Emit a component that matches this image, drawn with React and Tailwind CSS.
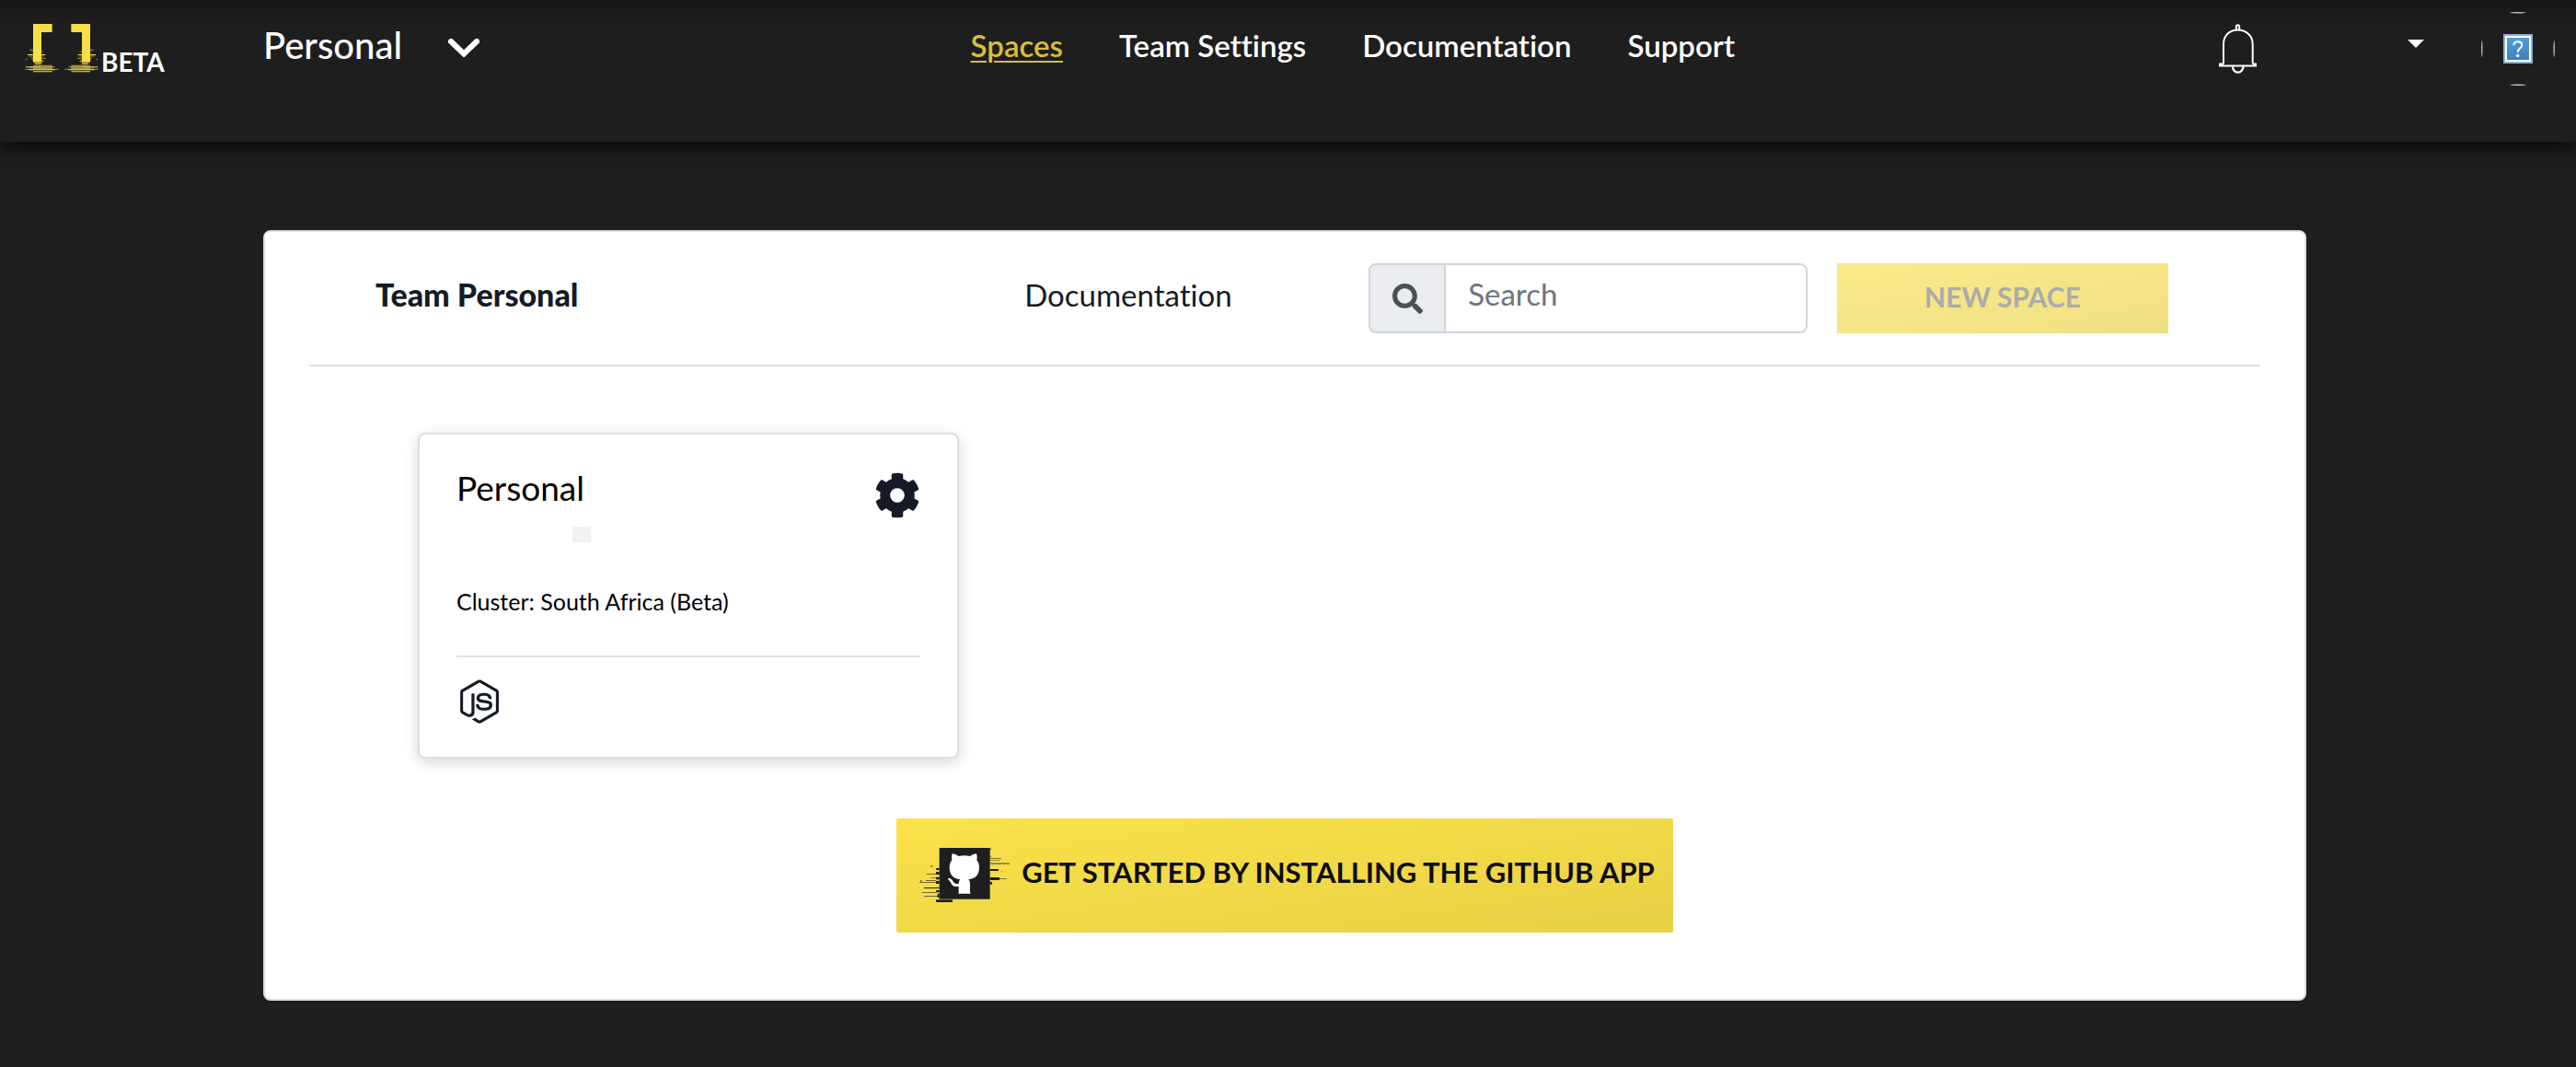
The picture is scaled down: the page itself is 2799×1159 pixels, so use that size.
import { FaCog, FaNodeJs, FaSearch } from 'react-icons/fa';

const NAV = [
  { label: 'Spaces', active: true },
  { label: 'Team Settings' },
  { label: 'Documentation' },
  { label: 'Support' },
];

function LogoHalf() {
  return (
    <g>
      <path d="M48 48H110V75H75V172H48Z" />
      <path d="M48 150H75V172H48Z" />
      <path opacity=".55" d="M36 131H48V134H36ZM42 137H82V139H42ZM75 134H80V136H75ZM42 158H90V162H42ZM45 165H80V168H45ZM48 168H84V170H48Z" />
      <path d="M30 147H88V150H30ZM34 152H82V154H34ZM25 162H28V165H25ZM50 170H80V172H50ZM53 175H76V178H53ZM56 179H74V181H56Z" />
      <path opacity=".6" d="M48 182H110V194H48ZM24 186H118V189H24ZM36 190H112V192H36ZM22 194H131V197H22Z" />
      <path d="M24 188H72V190H24ZM34 196H119V199H34ZM48 202H110V205H48Z" />
    </g>
  );
}

function Logo() {
  return (
    <svg viewBox="18 48 252 168" className="h-14 w-[84px] shrink-0" aria-hidden="true">
      <defs>
        <linearGradient id="logoGold" gradientUnits="userSpaceOnUse" x1="24" y1="0" x2="258" y2="0">
          <stop offset="0" stopColor="#fbe24a" />
          <stop offset="1" stopColor="#e8d045" />
        </linearGradient>
      </defs>
      <g fill="url(#logoGold)">
        <LogoHalf />
        <g transform="translate(282 0) scale(-1 1)">
          <LogoHalf />
        </g>
      </g>
    </svg>
  );
}

function BellIcon() {
  return (
    <svg viewBox="153 78 124 162" className="h-[54px] w-[41px]" fill="none" stroke="white" strokeWidth="6" aria-hidden="true">
      <path d="M210 98V86a5 5 0 0 1 10 0V98" />
      <path d="M168 208V144C168 116 188 97 215 97S264 116 264 144V208" />
      <path d="M168 209H156V215H274V209H264" />
      <path d="M198 217a17 19 0 0 0 35 0" strokeWidth="7" />
    </svg>
  );
}

function AvatarPlaceholder() {
  return (
    <svg viewBox="0 0 80 80" className="size-20" role="img" aria-label="Profile picture">
      <defs>
        <linearGradient id="avatarBlue" x1="0" y1="0" x2="0" y2="1">
          <stop offset="0" stopColor="#519fd3" />
          <stop offset="1" stopColor="#3f7fbb" />
        </linearGradient>
      </defs>
      <g fill="#c4c4c4">
        <ellipse cx="40" cy="0.8" rx="9" ry="0.7" />
        <ellipse cx="40" cy="79.2" rx="9" ry="0.7" />
        <ellipse cx="0.8" cy="40" rx="0.7" ry="9" />
        <ellipse cx="79.2" cy="40" rx="0.7" ry="9" />
      </g>
      <rect x="24" y="24" width="32" height="32" fill="#8fafd6" />
      <rect x="26" y="26" width="28" height="28" fill="white" />
      <rect x="28" y="28" width="24" height="24" fill="url(#avatarBlue)" />
      <path d="M35.3 36.2c.2-2.500 2-3.900 4.500-3.900 2.600 0 4.500 1.500 4.500 3.800 0 3.200-4.600 3.500-4.600 7.700" fill="none" stroke="white" strokeWidth="2" />
      <circle cx="39.600" cy="47.500" r="1.800" fill="white" />
    </svg>
  );
}

function GithubGlitch() {
  return (
    <svg viewBox="27 42 297 180" className="h-[60px] w-[99px] shrink-0" aria-hidden="true">
      <g fill="#1e1e1e">
        <rect x="92" y="42" width="165" height="167" />
        <path d="M81 108H92V114H81ZM81 120H92V129H81ZM81 137H92V145H81ZM81 150H92V159H81ZM81 180H92V187H81ZM86 191H92V204H86ZM42 171H92V174H42ZM81 211H135V219H81Z" />
        <path d="M257 111H285V117H257ZM257 138H288V147H257ZM257 153H264V161H257ZM257 44H261V48H257ZM257 68H260V72H257Z" />
        <path opacity=".6" d="M64 99H70V104H64ZM50 126H92V129H50ZM64 138H92V140H64ZM48 147H82V150H48ZM27 153H82V156H27ZM30 147H35V152H30ZM35 186H82V189H35ZM42 198H88V201H42Z" />
        <path opacity=".55" d="M257 75H294V78H257ZM257 82H290V84H257ZM257 91H321V95H257ZM288 141H311V144H288ZM294 117H297V119H294Z" />
      </g>
      <path fill="white" d="M134 61C141 61 150 66 155 69C167 66 180 66 192 69C197 66 206 61 213 61C216 69 215 77 214 82C219 88 222 96 222 105C222 131 209 142 187 145C191 149 192 153 192 158V187C192 189 193 190 194 191H154C155 190 155 189 155 187V168C138 170 133 164 130 157C127 150 123 147 120 144C119 141 122 140 126 141C132 143 135 149 139 154C143 160 149 160 155 158C155 153 157 149 160 145C138 142 125 131 125 105C125 96 128 88 133 82C132 77 131 69 134 61Z" />
    </svg>
  );
}

function Header() {
  return (
    <header className="relative z-10 h-[154px] bg-[#1e1e1e] bg-[linear-gradient(to_bottom,#161616,#1e1e1e_26px)] shadow-[0_4px_20px_rgba(0,0,0,0.9)]">
      <div className="grid h-[98px] grid-cols-[15fr_auto_13fr] items-center">
        <div className="flex items-center pl-[26px]">
          <a href="#home" className="mt-2.5 flex w-[260px] shrink-0 items-end text-[28px] leading-[30px] font-bold text-white">
            <Logo />
            BETA
          </a>
          <button type="button" className="flex items-center gap-[50px] text-[40px] leading-[48px] font-medium text-white">
            Personal
            <svg viewBox="0 0 34 20" className="mt-1.5 h-5 w-[34px]" fill="none" stroke="white" strokeWidth="6" strokeLinecap="round" aria-hidden="true">
              <path d="M3 3L17 16.500L31 3" />
            </svg>
          </button>
        </div>
        <nav className="flex items-center gap-[61px] text-[33px] leading-10 font-semibold text-white">
          {NAV.map(({ label, active }) => (
            <a
              key={label}
              href={'#' + label.toLowerCase().replace(' ', '-')}
              aria-current={active ? 'page' : undefined}
              className={active ? 'text-[#d9be3b] underline decoration-2 underline-offset-4' : ''}
            >
              {label}
            </a>
          ))}
        </nav>
        <div className="flex items-center justify-end pr-[23px]">
          <button type="button" aria-label="Notifications" className="mt-2 mr-[164px]">
            <BellIcon />
          </button>
          <button type="button" aria-label="Account menu" className="mr-[62px] -mt-1">
            <svg viewBox="0 0 18 9" className="h-[9px] w-[18px]" fill="white" aria-hidden="true">
              <path d="M0 0H18L9 9Z" />
            </svg>
          </button>
          <div className="mt-2">
            <AvatarPlaceholder />
          </div>
        </div>
      </div>
    </header>
  );
}

function Toolbar() {
  return (
    <div className="flex items-center border-b-2 border-[#dedede] py-[34px] pr-[100px] pl-[72px]">
      <h1 className="w-[36.2%] pb-2 text-[34px] leading-10 font-black text-[#151b26]">Team Personal</h1>
      <div className="w-[19.2%] pb-2 text-[33px] leading-10 text-[#151b26]">
        <a href="#docs">Documentation</a>
      </div>
      <div className="mr-8 flex h-[76px] min-w-0 flex-1 overflow-hidden rounded-lg border-2 border-[#ced4da] bg-white">
        <label htmlFor="search" aria-label="Search spaces" className="flex w-[82px] shrink-0 items-center justify-center border-r-2 border-[#ced4da] bg-[#ebecf0] text-[#495057]">
          <FaSearch className="size-[33px]" aria-hidden="true" />
        </label>
        <input
          id="search"
          type="search"
          aria-label="Search spaces"
          placeholder="Search"
          className="min-w-0 flex-1 px-6 pb-2 text-[33px] text-[#495057] outline-none placeholder:text-[#6c757d]"
        />
      </div>
      <button
        type="button"
        disabled
        className="h-[76px] w-[360px] shrink-0 bg-linear-to-br from-[#fcea8a] to-[#eee083] pb-1 text-[30px] leading-9 font-bold text-[#ababab]"
      >
        NEW SPACE
      </button>
    </div>
  );
}

function SpaceCard() {
  return (
    <article className="w-[588px] rounded-lg border-2 border-[#dedede] bg-white px-10 pt-[38px] pb-9 text-black shadow-[0_4px_16px_rgba(0,0,0,0.16)]">
      <div className="flex h-14 items-start justify-between">
        <h2 className="text-[37px] leading-10">Personal</h2>
        <button type="button" aria-label="Space settings" className="flex h-14 items-center text-[#151b26]">
          <FaCog className="size-[50px]" />
        </button>
      </div>
      <div className="mt-1.5 ml-[126px] h-[17px] w-5 bg-[#f1f1f1]" />
      <p className="mt-12 text-[25px] leading-8">Cluster: South Africa (Beta)</p>
      <hr className="mt-[43px] border-t-2 border-[#dee2e6]" />
      <FaNodeJs className="mt-6 ml-[3px] h-12 w-[44px] text-[#151b26]" role="img" aria-label="Node.js" />
    </article>
  );
}

export default function App() {
  return (
    <div className="min-h-screen bg-[#1e1e1e] pb-[71px] font-['Lato',sans-serif] [font-variant-ligatures:none]">
      <Header />
      <main className="mt-24 mr-[293px] ml-[286px] rounded-lg border-2 border-[#dedede] bg-white px-12 pb-[72px]">
        <Toolbar />
        <section className="mt-[72px] ml-[118px]">
          <SpaceCard />
        </section>
        <div className="mt-[65px] flex justify-center">
          <button
            type="button"
            className="flex h-[124px] items-center rounded-xs bg-linear-to-br from-[#fbe24a] to-[#e8d044] pr-5 pl-[25px] text-[31px] leading-10 font-bold text-[#0e0e0e]"
          >
            <GithubGlitch />
            <span className="ml-3 pb-2">GET STARTED BY INSTALLING THE GITHUB APP</span>
          </button>
        </div>
      </main>
    </div>
  );
}
